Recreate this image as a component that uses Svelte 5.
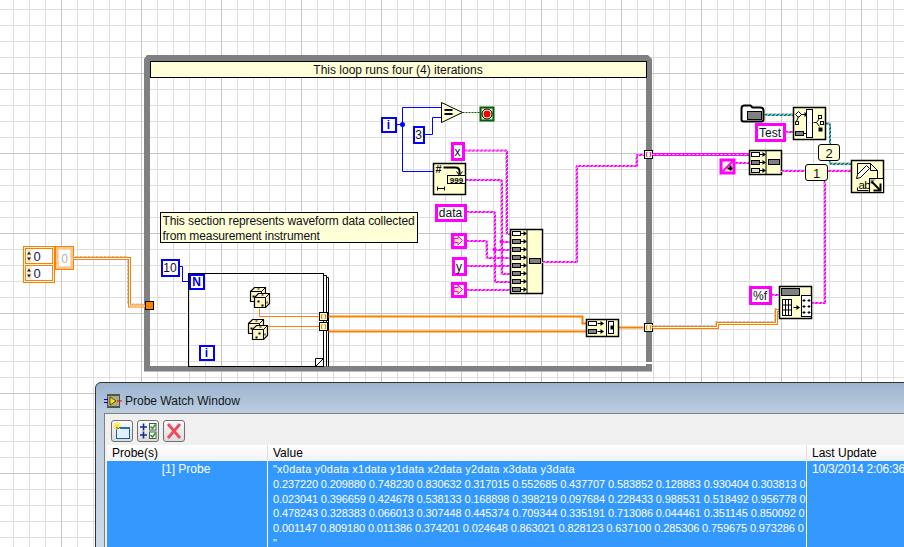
<script>
  const lines = [
    '"x0data y0data x1data y1data x2data y2data x3data y3data',
    '0.237220 0.209880 0.748230 0.830632 0.317015 0.552685 0.437707 0.583852 0.128883 0.930404 0.303813 0',
    '0.023041 0.396659 0.424678 0.538133 0.168898 0.398219 0.097684 0.228433 0.988531 0.518492 0.956778 0',
    '0.478243 0.328383 0.066013 0.307448 0.445374 0.709344 0.335191 0.713086 0.044461 0.351145 0.850092 0',
    '0.001147 0.809180 0.011386 0.374201 0.024648 0.863021 0.828123 0.637100 0.285306 0.759675 0.973286 0',
    '"'
  ];
  const rows8 = [233, 241, 249, 257, 265, 273, 281, 289];
  const plus = [0, 1, 2, 3, 4, 5];
</script>

{#snippet wave(d)}
  <path {d} class="gshadow" transform="translate(-1,1)" />
  <path {d} class="w1" />
  <path {d} class="w2" transform="translate(1,1)" />
{/snippet}

{#snippet teal(d)}
  <path {d} class="gshadow" transform="translate(1,-1)" />
  <path {d} class="w1 tl" />
  <path {d} class="w2 tl" transform="translate(1,1)" />
{/snippet}

{#snippet chain(d)}
  <path {d} class="c1" />
  <path {d} class="c2" />
{/snippet}

{#snippet dbl(d)}
  <path {d} class="gshadow" transform="translate(-2,-2)" />
  <path {d} class="d1" />
  <path {d} class="d2" />
{/snippet}

{#snippet konst(x, y, w, h, color, thick, label, cls)}
  <rect {x} {y} width={w} height={h} fill={color} class="crisp0" />
  <rect x={x + thick} y={y + thick} width={w - 2 * thick} height={h - 2 * thick} fill="#fff" class="crisp0" />
  <text x={x + w / 2} y={y + h / 2 + 4.5} text-anchor="middle" class={cls}>{label}</text>
{/snippet}

{#snippet node(x, y, w, h)}
  <rect {x} {y} width={w} height={h} class="nodebox" />
{/snippet}

{#snippet tunnel(x, y, c)}
  <rect {x} {y} width="8" height="8" fill="#ffffd6" stroke="#000" />
  <path d="M{x + 3} {y + 2}h-1v4h1M{x + 5} {y + 2}h1v4h-1" fill="none" stroke={c} />
{/snippet}

{#snippet cell(x, y)}
  <rect {x} {y} width="8" height="4" fill="url(#chk)" stroke="#000" />
{/snippet}

{#snippet hollow(x, y)}
  <rect {x} {y} width="8" height="4" fill="#fff" stroke="#000" />
{/snippet}

{#snippet arrow(x, y)}
  <path d="M{x} {y}h4" stroke="#000" fill="none" />
  <path d="M{x + 3} {y - 2.5}l3.5 2.5l-3.5 2.5z" fill="#000" stroke="none" />
{/snippet}

{#snippet arrowConst(x, y)}
  <rect {x} {y} width="16" height="16" fill="#ff00ff" class="crisp0" />
  <rect x={x + 3} y={y + 3} width="10" height="10" fill="#fff4f4" class="crisp0" />
  <path d="M{x + 3.5} {y + 6}h4v-2.5l4.5 4.5l-4.5 4.5v-2.5h-4z" fill="#ffe9a0" stroke="#ff00ff" />
{/snippet}

{#snippet cube(x, y, s)}
  <path d="M{x} {y + 4}l4 -4h{s}v{s - 1}l-4 4h-{s}z" fill="#fdf5c4" stroke="#000" stroke-width="1.200" />
  <path d="M{x} {y + 4}h{s}l4 -4M{x + s} {y + 4}v{s - 1}" fill="none" stroke="#000" />
{/snippet}

{#snippet dice(x, y, up)}
  {@render cube(x, y, 11)}
  <rect x={x + 7} y={y + 1} width="2" height="1" fill="#000" stroke="none" />
  <rect x={x + 2} y={y + 8} width="2" height="2" fill="#000" stroke="none" />
  {@render cube(x + 4, y + 6, 11)}
  <rect x={up ? x + 7 : x + 10} y={y + 13} width="2" height="2" fill="#000" stroke="none" />
  <rect x={up ? x + 11 : x + 7} y={y + 17} width="2" height="2" fill="#000" stroke="none" />
  <rect x={x + 16} y={y + 14} width="1" height="2" fill="#000" stroke="none" />
  <rect x={x + 11} y={y + 7} width="2" height="1" fill="#000" stroke="none" />
{/snippet}

<div class="stage">
  <svg class="diagram" width="904" height="547" viewBox="0 0 904 547">
    <defs>
      <pattern id="chk" width="2" height="2" patternUnits="userSpaceOnUse">
        <rect width="2" height="2" fill="#fff" />
        <rect width="1" height="1" fill="#000" />
        <rect x="1" y="1" width="1" height="1" fill="#000" />
      </pattern>
    </defs>

    <!-- while loop -->
    <path d="M150 371.5H144V59l3 -4H648l4 4V362H646V61H150V366H646V364h6V371.5z" fill="#808080" />
    <rect x="150" y="61" width="496" height="16" fill="#ffffd8" stroke="#000" class="edge" />
    <text x="398" y="74" text-anchor="middle" class="t">This loop runs four (4) iterations</text>

    <g transform="translate(.5,.5)">
      <!-- comment -->
      <rect x="160" y="212" width="257" height="30" fill="#ffffd8" stroke="#000" />
      <text x="162" y="224" class="t tight">This section represents waveform data collected</text>
      <text x="162" y="239" class="t tight">from measurement instrument</text>

      <!-- left controls -->
      <rect x="23" y="246" width="31" height="36" fill="#fff4e4" stroke="#ff8000" />
      <rect x="25" y="248" width="27" height="15" fill="#fff" stroke="#ff8000" />
      <rect x="25" y="265" width="27" height="15" fill="#fff" stroke="#ff8000" />
      <rect x="26" y="249" width="5" height="13" fill="#ffe8c8" />
      <rect x="26" y="266" width="5" height="13" fill="#ffe8c8" />
      <path d="M26.500 254l2 -3l2 3zM26.500 257l2 3l2 -3zM26.500 271l2 -3l2 3zM26.500 274l2 3l2 -3z" fill="#222" />
      <text x="33" y="260.500" class="t num">0</text>
      <text x="33" y="277.500" class="t num">0</text>
      <rect x="55" y="246" width="18" height="23" fill="#ffc890" stroke="#ff8000" />
      <rect x="58" y="249" width="12" height="17" fill="#fff" stroke="#ffd8b0" />
      <text x="64" y="262" text-anchor="middle" class="t ghost">0</text>
      {@render dbl('M73 258H129V305.500H145')}
      <rect x="145" y="301" width="8" height="8" fill="#ff8000" stroke="#000" />

      <!-- for loop -->
      <path d="M323 275h3v91M326 277h2v89" fill="none" stroke="#000" />
      <rect x="188" y="273" width="135" height="93" fill="none" stroke="#000" />
      <path d="M315 366l8 -8h-8z" fill="#fff" stroke="#000" />
      {@render konst(160, 258, 19, 18, '#0000ff', 2, '10', 't')}
      <path d="M179 266H182V281H188" fill="none" stroke="#0000ff" />
      {@render konst(188, 273, 16, 16, '#0000ff', 2, 'N', 't blue bold')}
      {@render konst(198, 344, 16, 16, '#0000ff', 2, 'i', 't blue bold')}
      {@render dice(250, 287, true)}
      {@render dice(248, 319, false)}
      <path d="M259 308V316H319M267 326H319" fill="none" stroke="#ff8000" />
      <path d="M328 316H582V323H586M328 331H586M618 327H643" class="thick" />
      {@render tunnel(319, 312, '#ff8000')}
      {@render tunnel(319, 322, '#ff8000')}

      <!-- loop condition -->
      {@render konst(380, 116, 16, 16, '#0000ff', 2, 'i', 't blue bold')}
      <path d="M396 124H402M441 107H402V171H433" fill="none" stroke="#0000ff" />
      <circle cx="402" cy="124" r="2.500" fill="#0000ff" />
      {@render konst(412, 125, 12, 18, '#0000ff', 2, '3', 't')}
      <path d="M424 134H432V117H441" fill="none" stroke="#0000ff" />
      <path d="M441 102L462 112L441 122z" fill="#ffffcf" stroke="#000" />
      <path d="M444 109.500h8M444 113.500h8" stroke="#000" stroke-width="2" fill="none" />
      <path d="M462 112H479" stroke="#006000" stroke-dasharray="2 1" fill="none" />
      <rect x="479" y="106" width="15" height="15" fill="#006000" />
      <rect x="481" y="108" width="11" height="11" fill="#e8e8c8" />
      <circle cx="486.500" cy="113.500" r="5" fill="#fff" stroke="#000" />
      <circle cx="486.500" cy="113.500" r="3.500" fill="#ff0000" stroke="none" />

      <!-- string sources -->
      {@render wave('M464 149.500H506V233H510')}
      {@render wave('M465 179H501V273H510M501 241H510')}
      {@render wave('M466 211H494V281H510M494 249H510')}
      {@render wave('M466 240H486V257H510')}
      {@render wave('M466 265H510')}
      {@render wave('M466 289H510')}
      <circle cx="501" cy="241" r="2" fill="#ff00ff" />
      <circle cx="494" cy="249" r="2" fill="#ff00ff" />
      {@render konst(450, 141, 14, 19, '#ff00ff', 3, 'x', 't')}
      {@render konst(434, 203, 32, 18, '#ff00ff', 3, 'data', 't')}
      {@render konst(451, 256, 15, 19, '#ff00ff', 3, 'y', 't')}
      {@render arrowConst(450, 232)}
      {@render arrowConst(450, 281)}

      <!-- format node -->
      {@render node(433, 163, 32, 31)}
      <text x="435" y="172" class="t bold small">#</text>
      <path d="M443 167H455q4 0 4 4v3" fill="none" stroke="#000" stroke-width="2" />
      <path d="M456 171l3 4l3 -4" fill="none" stroke="#000" />
      <rect x="447" y="175" width="18" height="8" fill="#ffffcf" stroke="#000" />
      <text x="456" y="182.500" text-anchor="middle" class="mini">999</text>
      <path d="M437 188h7M437 186v4M444 186v4" fill="none" stroke="#000" />

      <!-- build 8 row -->
      {@render node(510, 229, 32, 64)}
      <path d="M526.500 229V293" stroke="#000" />
      {#each rows8 as y, i}
        {#if i === 0}
          {@render hollow(512, y - 2)}
        {:else}
          {@render cell(512, y - 2)}
        {/if}
        {@render arrow(520, y)}
      {/each}
      <rect x="529" y="258" width="11" height="5" fill="url(#chk)" stroke="#000" />
      {@render wave('M542 261H576V165H636V154H643')}
      {@render tunnel(644, 150, '#ff00ff')}
      {@render chain('M652 154H749')}

      <!-- merge -->
      {@render node(586, 319, 32, 17)}
      {@render hollow(588, 321)}
      {@render arrow(597, 323)}
      {@render cell(588, 329)}
      {@render arrow(597, 331)}
      <path d="M606 319V336" stroke="#000" />
      <rect x="608" y="321" width="5" height="12" fill="#fff" stroke="#000" />
      <rect x="610" y="325" width="3" height="4" fill="#000" />
      {@render tunnel(644, 323, '#ff8000')}
      {@render dbl('M652 327H717V323H776V310H779')}

      <!-- right group -->
      {@render teal('M764 114H793')}
      {@render teal('M825 123H829V163H851')}
      <path d="M741 108q0 -3 3 -3h6l2 2h8q3 0 3 3v9q0 2 -2 2h-18q-2 0 -2 -2z" fill="#fff" stroke="#000" stroke-width="2" />
      <rect x="747" y="111" width="14" height="8" fill="url(#chk)" stroke="#000" />
      {@render wave('M785 131H793')}
      {@render konst(754, 122, 31, 19, '#ff00ff', 3, 'Test', 't')}
      {@render node(793, 107, 32, 32)}
      <path d="M795 114l3 -3l3 3l-3 3zM795 121h3v3h-3zM798 116l-2 5" fill="#fff" stroke="#000" />
      {@render arrow(801, 114)}
      {@render cell(795, 131)}
      {@render arrow(803, 133)}
      <rect x="806" y="109" width="6" height="28" fill="#fff" stroke="#000" />
      <path d="M813 122h3l3 -4M816 122l3 4" fill="none" stroke="#000" />
      <rect x="818" y="115" width="3" height="3" fill="#fff" stroke="#000" />
      <rect x="820" y="121" width="3" height="3" fill="#fff" stroke="#000" />
      <rect x="818" y="127" width="4" height="4" fill="#000" />

      {@render wave('M735 162H749')}
      <rect x="719" y="158" width="16" height="16" fill="#ff00ff" />
      <rect x="722" y="161" width="10" height="10" fill="#fff4d8" />
      <path d="M722 171L732 161" stroke="#ff00ff" stroke-width="2" />
      <path d="M727 168h5M730 165v5" stroke="#000" stroke-width="2" />
      {@render node(749, 150, 32, 24)}
      {@render hollow(751, 152)}
      {@render arrow(759, 154)}
      {@render cell(751, 160)}
      {@render arrow(759, 162)}
      <rect x="751" y="168" width="8" height="4" fill="#ddd" stroke="#000" />
      {@render arrow(759, 170)}
      <path d="M765.500 150V174" stroke="#000" />
      <rect x="768" y="159" width="11" height="5" fill="url(#chk)" stroke="#000" />

      {@render wave('M781 170H805')}
      {@render wave('M824 170H851')}
      {@render wave('M824 180V302H811')}
      <rect x="818" y="144" width="21" height="16" rx="2.500" fill="#ffffd8" stroke="#000" />
      <text x="828.500" y="157" text-anchor="middle" class="t big">2</text>
      <rect x="805" y="164" width="22" height="16" rx="2.500" fill="#ffffd8" stroke="#000" />
      <text x="816" y="177" text-anchor="middle" class="t big">1</text>

      <!-- write file -->
      {@render node(851, 160, 32, 32)}
      <path d="M857 178V163h13l7 7v8M857 187v3h11" fill="none" stroke="#000" />
      <path d="M870 163v7h7" fill="none" stroke="#000" />
      <path d="M856 178l1 -4l9 -9l3 3l-9 9z" fill="#fff" stroke="#000" />
      <text x="858" y="188" class="ab">ab</text>
      <rect x="869" y="178" width="14" height="14" fill="#ffffcf" stroke="#000" />
      <path d="M870 179h5l-5 5z" fill="url(#chk)" />
      <path d="M871 181l8 8" stroke="#000" stroke-width="2" fill="none" />
      <path d="M880 183v7h-7" stroke="#000" stroke-width="2" fill="none" />

      <!-- spreadsheet -->
      {@render wave('M771 294H779')}
      {@render konst(748, 285, 23, 19, '#ff00ff', 3, '%f', 't')}
      {@render node(779, 286, 32, 32)}
      <rect x="781" y="288" width="18" height="7" fill="url(#chk)" stroke="#000" />
      <rect x="782" y="299" width="9" height="16" fill="#fff" stroke="#000" />
      <path d="M782 304.500h9M782 309.500h9M785 299v16M788 299v16" stroke="#000" fill="none" />
      {@render arrow(793, 307)}
      <rect x="801" y="295" width="10" height="21" fill="#fff" stroke="#000" />
      {#each plus as i}
        <path d="M{802 + (i % 2) * 5} {300 + Math.floor(i / 2) * 6}h3M{803.500 + (i % 2) * 5} {298.500 + Math.floor(i / 2) * 6}v3" stroke="#000" fill="none" />
      {/each}
    </g>
  </svg>

  <section class="window">
    <header class="title">
      <svg width="18" height="15" viewBox="0 0 18 15">
        <rect x="3" y="0" width="13" height="14" fill="#554" />
        <rect x="4" y="2" width="11" height="10" fill="#aa8" />
        <path d="M6 3l6 4l-6 4z" fill="#ffe800" stroke="#000" stroke-width=".6" />
        <path d="M0 5.500h4M0 8.500h4" stroke="#0000e0" />
        <path d="M13 7h5" stroke="#e00000" />
      </svg>
      <span>Probe Watch Window</span>
    </header>
    <div class="body">
      <div class="toolbar">
        <button class="tool" aria-label="New probe">
          <svg width="18" height="18" viewBox="0 0 18 18">
            <rect x="3.500" y="5.500" width="13" height="11" fill="#dff0ff" stroke="#1a5aa8" />
            <rect x="3" y="5" width="14" height="2" fill="#2a6ac0" />
            <path d="M4 0v8M0 4h8M1 1l6 6M7 1l-6 6" stroke="#ffe000" />
          </svg>
        </button>
        <button class="tool" aria-label="Check all">
          <svg width="18" height="18" viewBox="0 0 18 18">
            <path d="M1 5h7M4.500 1.500v7M1 13h7M4.500 9.500v7" stroke="#1a2a8a" stroke-width="1.600" />
            <rect x="10.500" y="1.500" width="6.500" height="6.500" fill="#fff" stroke="#555" />
            <rect x="10.500" y="10" width="6.500" height="6.500" fill="#fff" stroke="#555" />
            <path d="M11.500 4.500l2 2l3 -4M11.500 13l2 2l3 -4" stroke="#20a020" stroke-width="1.600" fill="none" />
          </svg>
        </button>
        <button class="tool" aria-label="Delete">
          <svg width="18" height="18" viewBox="0 0 18 18">
            <path d="M3 2l12 14M15 2L3 16" stroke="#f04860" stroke-width="2.800" />
          </svg>
        </button>
      </div>
      <div class="table">
        <div class="head">Probe(s)</div>
        <div class="head">Value</div>
        <div class="head">Last Update</div>
        <div class="cell probe">[1] Probe</div>
        <div class="cell value">
          {#each lines as line}<div class="line">{line}</div>{/each}
        </div>
        <div class="cell stamp">10/3/2014 2:06:36</div>
      </div>
    </div>
  </section>
</div>

<style>
  :global(body) { margin: 0; }
  .stage {
    position: relative;
    width: 904px;
    height: 547px;
    overflow: hidden;
    background-color: #fff;
    background-image:
      repeating-linear-gradient(90deg, transparent 0 61px, #c6c6c6 61px 62px, transparent 62px 80px),
      repeating-linear-gradient(180deg, transparent 0 73px, #c6c6c6 73px 74px, transparent 74px 80px),
      repeating-linear-gradient(90deg, transparent 0 13px, #dedede 13px 14px, transparent 14px 16px),
      repeating-linear-gradient(180deg, transparent 0 9px, #dedede 9px 10px, transparent 10px 16px);
  }
  .diagram { position: absolute; left: 0; top: 0; display: block; }
  .t {
    font-family: "Liberation Sans", Arial, sans-serif;
    font-size: 12px;
    fill: #101018;
  }
  .tight { letter-spacing: -0.1px; }
  .big { font-size: 13px; }
  .small { font-size: 11px; }
  .num { fill: #102060; font-size: 13px; }
  .ghost { fill: #b0b0b0; }
  .blue { fill: #0000d8; }
  .bold { font-weight: 700; }
  .mini { font-family: "Liberation Sans", sans-serif; font-size: 8px; font-weight: 700; fill: #000; }
  .ab { font-family: "Liberation Sans", sans-serif; font-size: 11.500px; letter-spacing: -0.6px; fill: #000; }
  .edge { shape-rendering: crispEdges; }
  .crisp0 { shape-rendering: crispEdges; }
  .nodebox { fill: #ffffcf; stroke: #000; stroke-width: 1.500; }
  .thick { fill: none; stroke: #ff8000; stroke-width: 2; }
  .d1 { fill: none; stroke: #ff8000; stroke-width: 3; }
  .d2 { fill: none; stroke: #fff; stroke-width: 1; }
  .c1 { fill: none; stroke: #ff00ff; stroke-width: 3; }
  .c2 { fill: none; stroke: #fff; stroke-width: 1; stroke-dasharray: 2 2; }
  .w1 { fill: none; stroke: #ff00ff; stroke-width: 1; stroke-dasharray: 3 1; }
  .w2 { fill: none; stroke: #ff00ff; stroke-width: 1; stroke-dasharray: 3 1; stroke-dashoffset: 2; }
  .tl { stroke: #008080; }
  .gshadow { fill: none; stroke: #c0c0c0; stroke-width: 1; stroke-dasharray: 3 1; }

  .window {
    position: absolute;
    left: 95px;
    top: 382px;
    width: 860px;
    height: 180px;
    box-sizing: border-box;
    border: 1px solid #30343a;
    border-radius: 6px 6px 0 0;
    background: linear-gradient(#9db4cf, #bccde0 30px, #cddbe9);
    padding: 0 8px;
    font-family: "Liberation Sans", Arial, sans-serif;
    font-size: 12px;
  }
  .title {
    height: 30px;
    box-sizing: border-box;
    padding-top: 6px;
    display: flex;
    align-items: center;
    gap: 3px;
    color: #101820;
  }
  .body {
    background: #f0f0f0;
    border: 1px solid #808080;
    border-bottom: 0;
    height: 150px;
    padding: 0 2px;
  }
  .toolbar {
    height: 31px;
    display: flex;
    align-items: center;
    gap: 4px;
    padding: 3px 0 0 4px;
    box-sizing: border-box;
  }
  .tool {
    width: 22px;
    height: 22px;
    padding: 0;
    display: flex;
    align-items: center;
    justify-content: center;
    border: 1px solid #707070;
    border-radius: 3px;
    background: linear-gradient(#fafafa, #dcdcdc);
  }
  .table {
    display: grid;
    grid-template-columns: 161px 539px 1fr;
    grid-template-rows: 16px 1fr;
    height: 119px;
  }
  .head {
    background: linear-gradient(#ffffff, #f2f2f2);
    border-right: 1px solid #e0e0e0;
    padding: 1px 0 0 5px;
    line-height: 14px;
    color: #000;
  }
  .cell {
    background: #3399ff;
    color: #fff;
    border-right: 1px solid #fff;
    line-height: 14.800px;
    padding-top: 1px;
    overflow: hidden;
    white-space: nowrap;
    font-size: 11px;
  }
  .line { letter-spacing: -0.12px; }
  .line:first-child { letter-spacing: 0.22px; }
  .line:last-child { line-height: 12px; margin-top: 1px; }
  .probe { text-align: center; padding-right: 2px; font-size: 12px; }
  .value { padding-left: 5px; }
  .stamp { padding-left: 5px; font-size: 12px; letter-spacing: -0.22px; border-right: 0; }
</style>
